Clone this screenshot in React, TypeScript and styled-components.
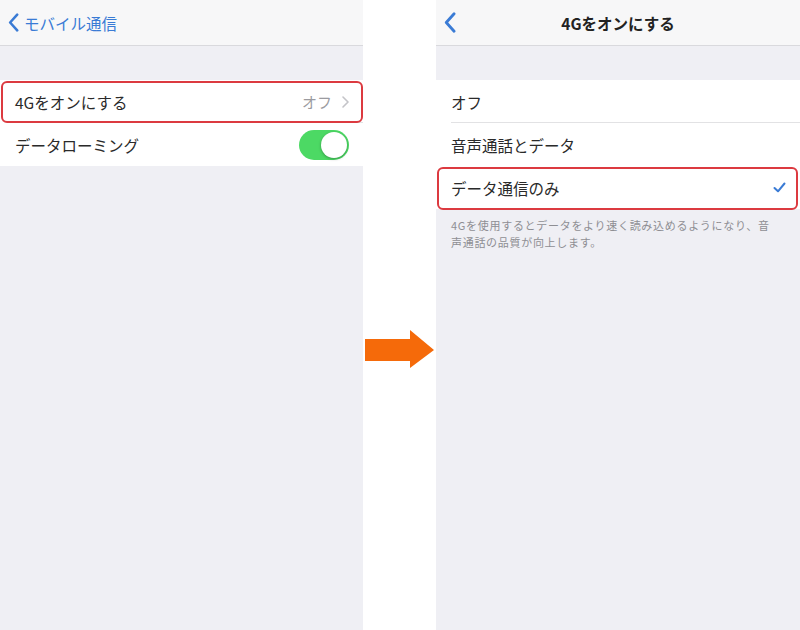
import React from "react";
import styled, { createGlobalStyle } from "styled-components";

const Global = createGlobalStyle`
  html, body { margin: 0; padding: 0; background: #ffffff; }
  body { font-family: "Noto Sans CJK JP", "Noto Sans", sans-serif; }
`;

const Page = styled.div`
  display: flex;
  width: 800px;
  height: 630px;
  overflow: hidden;
`;

const Panel = styled.div<{ $w: number }>`
  width: ${(p) => p.$w}px;
  flex: none;
  background: #efeff4;
  display: flex;
  flex-direction: column;
`;

const Gap = styled.div`
  width: 73px;
  flex: none;
  background: #ffffff;
  display: flex;
  justify-content: center;
  padding-top: 330px;
  box-sizing: border-box;
`;

const NavBar = styled.div`
  height: 46px;
  box-sizing: border-box;
  background: #f7f7f8;
  border-bottom: 1px solid #d9d9dd;
  display: flex;
  align-items: center;
  position: relative;
  padding-left: 8px;
`;

const BackLink = styled.div`
  display: flex;
  align-items: center;
  gap: 5px;
  color: #3a7bd5;
  font-size: 15.5px;
`;

const NavTitle = styled.div`
  position: absolute;
  left: 0;
  right: 0;
  text-align: center;
  font-size: 15.5px;
  font-weight: 700;
  color: #222;
  pointer-events: none;
`;

const Spacer = styled.div`
  height: 34px;
`;

const Group = styled.div`
  background: #ffffff;
  display: flex;
  flex-direction: column;
`;

const Row = styled.div<{ $highlight?: "left" | "right"; $sep?: boolean }>`
  height: 43px;
  display: flex;
  align-items: center;
  justify-content: space-between;
  padding: 0 14px 0 15px;
  position: relative;
  font-size: 15.5px;
  color: #2a2a2a;
  ${(p) =>
    p.$sep
      ? `&::before { content: ""; position: absolute; left: 15px; right: 0; bottom: 0; height: 1px; background: #e2e2e4; }`
      : ""}
  ${(p) =>
    p.$highlight === "left"
      ? `&::after { content: ""; position: absolute; left: 1px; right: 0; top: 1px; bottom: 0; border: 2.5px solid #dc3a40; border-radius: 6px; }`
      : p.$highlight === "right"
      ? `&::after { content: ""; position: absolute; left: 1px; right: 2px; top: 1px; bottom: -1px; border: 2.5px solid #dc3a40; border-radius: 6px; }`
      : ""}
`;

const Detail = styled.div`
  display: flex;
  align-items: center;
  gap: 10px;
  color: #9b9ba0;
  font-size: 15px;
`;

const Toggle = styled.div`
  width: 50px;
  height: 30px;
  border-radius: 15px;
  background: #4cd964;
  position: relative;
  &::after {
    content: "";
    position: absolute;
    right: 2px;
    top: 2px;
    width: 26px;
    height: 26px;
    border-radius: 50%;
    background: #fff;
    box-shadow: 0 1px 3px rgba(0, 0, 0, 0.3);
  }
`;

const Footer = styled.div`
  padding: 8px 25px 0 15px;
  font-size: 11px;
  letter-spacing: 0.7px;
  line-height: 17px;
  color: #8e8e93;
`;

const Chevron = ({ color, w, h, sw }: { color: string; w: number; h: number; sw: number }) => (
  <svg width={w} height={h} viewBox="0 0 10 18" fill="none">
    <path d="M8.5 1.5 L1.8 9 L8.5 16.5" stroke={color} strokeWidth={sw} strokeLinecap="round" strokeLinejoin="round" />
  </svg>
);

const RightChevron = () => (
  <svg width="7" height="12" viewBox="0 0 7 12" fill="none">
    <path d="M1 1 L6 6 L1 11" stroke="#c4c4c8" strokeWidth="1.6" strokeLinecap="round" strokeLinejoin="round" />
  </svg>
);

const Check = () => (
  <svg width="13" height="11" viewBox="0 0 13 11" fill="none">
    <path d="M1.5 6 L5 9.3 L11.5 1.5" stroke="#3a7bd5" strokeWidth="2" strokeLinecap="round" strokeLinejoin="round" />
  </svg>
);

const Arrow = () => (
  <svg width="70" height="40" viewBox="0 0 70 40">
    <polygon points="0,9 45,9 45,0 69,20 45,38 45,31 0,31" fill="#f56a0a" />
  </svg>
);

export default function App() {
  return (
    <>
      <Global />
      <Page>
        <Panel $w={363}>
          <NavBar>
            <BackLink>
              <Chevron color="#3a7bd5" w={11} h={19} sw={2.4} />
              モバイル通信
            </BackLink>
          </NavBar>
          <Spacer />
          <Group>
            <Row $highlight="left" $sep>
              <span>4Gをオンにする</span>
              <Detail>
                オフ
                <RightChevron />
              </Detail>
            </Row>
            <Row>
              <span>データローミング</span>
              <Toggle />
            </Row>
          </Group>
        </Panel>
        <Gap>
          <Arrow />
        </Gap>
        <Panel $w={364}>
          <NavBar>
            <Chevron color="#3a7bd5" w={12} h={21} sw={2.4} />
            <NavTitle>4Gをオンにする</NavTitle>
          </NavBar>
          <Spacer />
          <Group>
            <Row $sep>
              <span>オフ</span>
            </Row>
            <Row>
              <span>音声通話とデータ</span>
            </Row>
            <Row $highlight="right">
              <span>データ通信のみ</span>
              <Check />
            </Row>
          </Group>
          <Footer>
            4Gを使用するとデータをより速く読み込めるようになり、音声通話の品質が向上します。
          </Footer>
        </Panel>
      </Page>
    </>
  );
}
